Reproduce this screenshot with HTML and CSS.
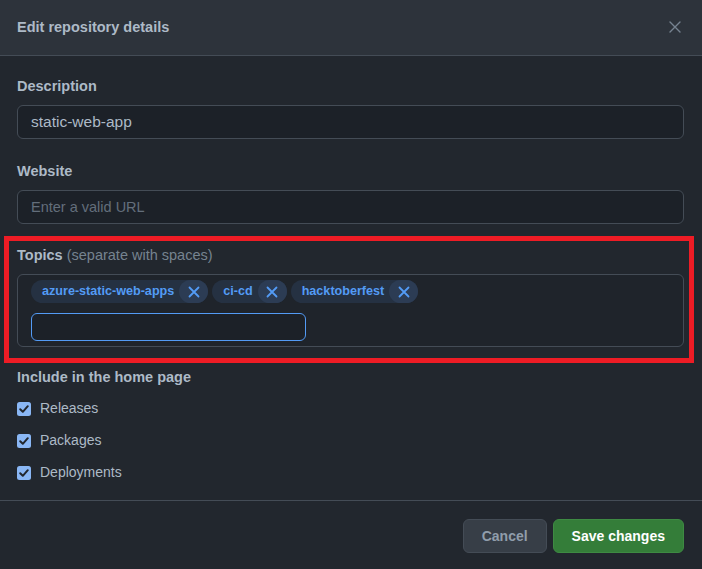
FILE: index.html
```html
<!DOCTYPE html>
<html lang="en">
<head>
<meta charset="utf-8">
<title>Edit repository details</title>
<link rel="stylesheet" href="styles.css">
</head>
<body>
<div class="dialog">
  <div class="header">
    <h1 class="title">Edit repository details</h1>
    <button class="close" aria-label="Close">
      <svg width="12" height="12" viewBox="0 0 12 12"><path d="M1 1 L11 11 M11 1 L1 11" stroke="#768390" stroke-width="1.4" fill="none" stroke-linecap="round"/></svg>
    </button>
  </div>
  <div class="body">
    <div class="field f-desc">
      <label class="label">Description</label>
      <div class="input">static-web-app</div>
    </div>
    <div class="field f-web">
      <label class="label">Website</label>
      <div class="input placeholder">Enter a valid URL</div>
    </div>
    <div class="field f-topics">
      <label class="label">Topics <span class="muted">(separate with spaces)</span></label>
      <div class="topics">
        <div class="chips">
          <span class="chip"><span class="chip-text">azure-static-web-apps</span><span class="chip-x"><svg width="12" height="12" viewBox="0 0 12 12"><path d="M1.5 1.5 L10.5 10.5 M10.5 1.5 L1.5 10.5" stroke="#539bf5" stroke-width="1.8" fill="none" stroke-linecap="round"/></svg></span></span>
          <span class="chip"><span class="chip-text">ci-cd</span><span class="chip-x"><svg width="12" height="12" viewBox="0 0 12 12"><path d="M1.5 1.5 L10.5 10.5 M10.5 1.5 L1.5 10.5" stroke="#539bf5" stroke-width="1.8" fill="none" stroke-linecap="round"/></svg></span></span>
          <span class="chip"><span class="chip-text">hacktoberfest</span><span class="chip-x"><svg width="12" height="12" viewBox="0 0 12 12"><path d="M1.5 1.5 L10.5 10.5 M10.5 1.5 L1.5 10.5" stroke="#539bf5" stroke-width="1.8" fill="none" stroke-linecap="round"/></svg></span></span>
        </div>
        <div class="topic-input"></div>
      </div>
    </div>
    <div class="field f-include">
      <label class="label">Include in the home page</label>
      <div class="checks">
        <div class="check"><svg class="box" width="14" height="14" viewBox="0 0 14 14"><rect x="0" y="0" width="14" height="14" rx="2.5" fill="#8ab7f5"/><path d="M3.2 7.2 L5.8 9.8 L10.8 4.2" stroke="#22272e" stroke-width="2" fill="none" stroke-linecap="round" stroke-linejoin="round"/></svg><span>Releases</span></div>
        <div class="check"><svg class="box" width="14" height="14" viewBox="0 0 14 14"><rect x="0" y="0" width="14" height="14" rx="2.5" fill="#8ab7f5"/><path d="M3.2 7.2 L5.8 9.8 L10.8 4.2" stroke="#22272e" stroke-width="2" fill="none" stroke-linecap="round" stroke-linejoin="round"/></svg><span>Packages</span></div>
        <div class="check"><svg class="box" width="14" height="14" viewBox="0 0 14 14"><rect x="0" y="0" width="14" height="14" rx="2.5" fill="#8ab7f5"/><path d="M3.2 7.2 L5.8 9.8 L10.8 4.2" stroke="#22272e" stroke-width="2" fill="none" stroke-linecap="round" stroke-linejoin="round"/></svg><span>Deployments</span></div>
      </div>
    </div>
  </div>
  <div class="footer">
    <button class="btn btn-cancel">Cancel</button>
    <button class="btn btn-save">Save changes</button>
  </div>
  <div class="highlight"></div>
</div>
</body>
</html>
```
FILE: styles.css
```css
html, body {
  margin: 0;
  padding: 0;
  background: #22272e;
}
body {
  font-family: "Liberation Sans", Arial, sans-serif;
  font-size: 14px;
  color: #adbac7;
}
.dialog {
  position: relative;
  width: 702px;
  height: 569px;
  background: #22272e;
  overflow: hidden;
}
.header {
  height: 55px;
  background: #2d333b;
  border-bottom: 1px solid #444c56;
  display: flex;
  align-items: center;
  justify-content: space-between;
  padding: 0 20px 0 17px;
}
.title {
  margin: 0;
  font-size: 14.5px;
  font-weight: 700;
  line-height: 20px;
  color: #adbac7;
  padding-bottom: 2px;
}
.close {
  background: none;
  border: 0;
  padding: 0;
  width: 14px;
  height: 14px;
  display: flex;
  align-items: center;
  justify-content: center;
  margin-bottom: 2px;
}
.body {
  padding: 20px 18px 0 17px;
}
.field {
  display: flex;
  flex-direction: column;
}
.f-desc { margin-bottom: 22px; }
.f-web { margin-bottom: 21px; }
.f-topics { margin-bottom: 20px; }
.label {
  font-weight: 700;
  font-size: 14.5px;
  line-height: 20px;
  margin-bottom: 9px;
  color: #adbac7;
}
.muted {
  font-weight: 400;
  color: #768390;
}
.input {
  box-sizing: border-box;
  height: 34px;
  background: #1c2128;
  border: 1px solid #444c56;
  border-radius: 6px;
  padding: 0 12px 0 13px;
  display: flex;
  align-items: center;
  color: #adbac7;
  font-size: 15.5px;
}
.placeholder {
  color: #636e7b;
  font-size: 14.5px;
}
.topics {
  box-sizing: border-box;
  height: 73px;
  background: #1f242b;
  border: 1px solid #444c56;
  border-radius: 6px;
  padding: 5px 13px 5px 13px;
  display: flex;
  flex-direction: column;
  gap: 10px;
}
.chips {
  display: flex;
  gap: 4px;
}
.chip {
  display: flex;
  align-items: center;
  height: 23px;
  border-radius: 12px;
  background: #253142;
  padding-left: 11px;
  font-size: 12.6px;
  font-weight: 700;
  color: #539bf5;
}
.chip-text {
  margin-right: 5px;
  line-height: 23px;
}
.chip-x {
  width: 29px;
  height: 23px;
  border-radius: 12px;
  background: #2c3c54;
  display: flex;
  align-items: center;
  justify-content: center;
}
.topic-input {
  box-sizing: border-box;
  width: 275px;
  height: 28px;
  border: 1.5px solid #539bf5;
  border-radius: 6px;
  background: #1c2128;
}
.f-include .label {
  margin-bottom: 11px;
}
.checks {
  display: flex;
  flex-direction: column;
  gap: 12px;
}
.check {
  display: flex;
  align-items: center;
  line-height: 20px;
  height: 20px;
  font-size: 14px;
  color: #adbac7;
}
.check .box {
  margin-right: 9px;
  flex: none;
  position: relative;
  top: 1px;
}
.footer {
  margin-top: 18px;
  border-top: 1px solid #444c56;
  padding: 18px 18px 0 17px;
  display: flex;
  justify-content: flex-end;
  gap: 6px;
}
.btn {
  box-sizing: border-box;
  height: 34px;
  border-radius: 6px;
  font-family: "Liberation Sans", Arial, sans-serif;
  font-size: 14px;
  font-weight: 700;
  padding: 0 18px;
  white-space: nowrap;
  cursor: pointer;
}
.btn-cancel {
  background: #373e47;
  border: 1px solid #444c56;
  color: #909dab;
}
.btn-save {
  background: #347d39;
  border: 1px solid #3e8a43;
  color: #ffffff;
}
.highlight {
  position: absolute;
  left: 4px;
  top: 236px;
  width: 690px;
  height: 127px;
  box-sizing: border-box;
  border: 5px solid #ee1c25;
  pointer-events: none;
}
```
